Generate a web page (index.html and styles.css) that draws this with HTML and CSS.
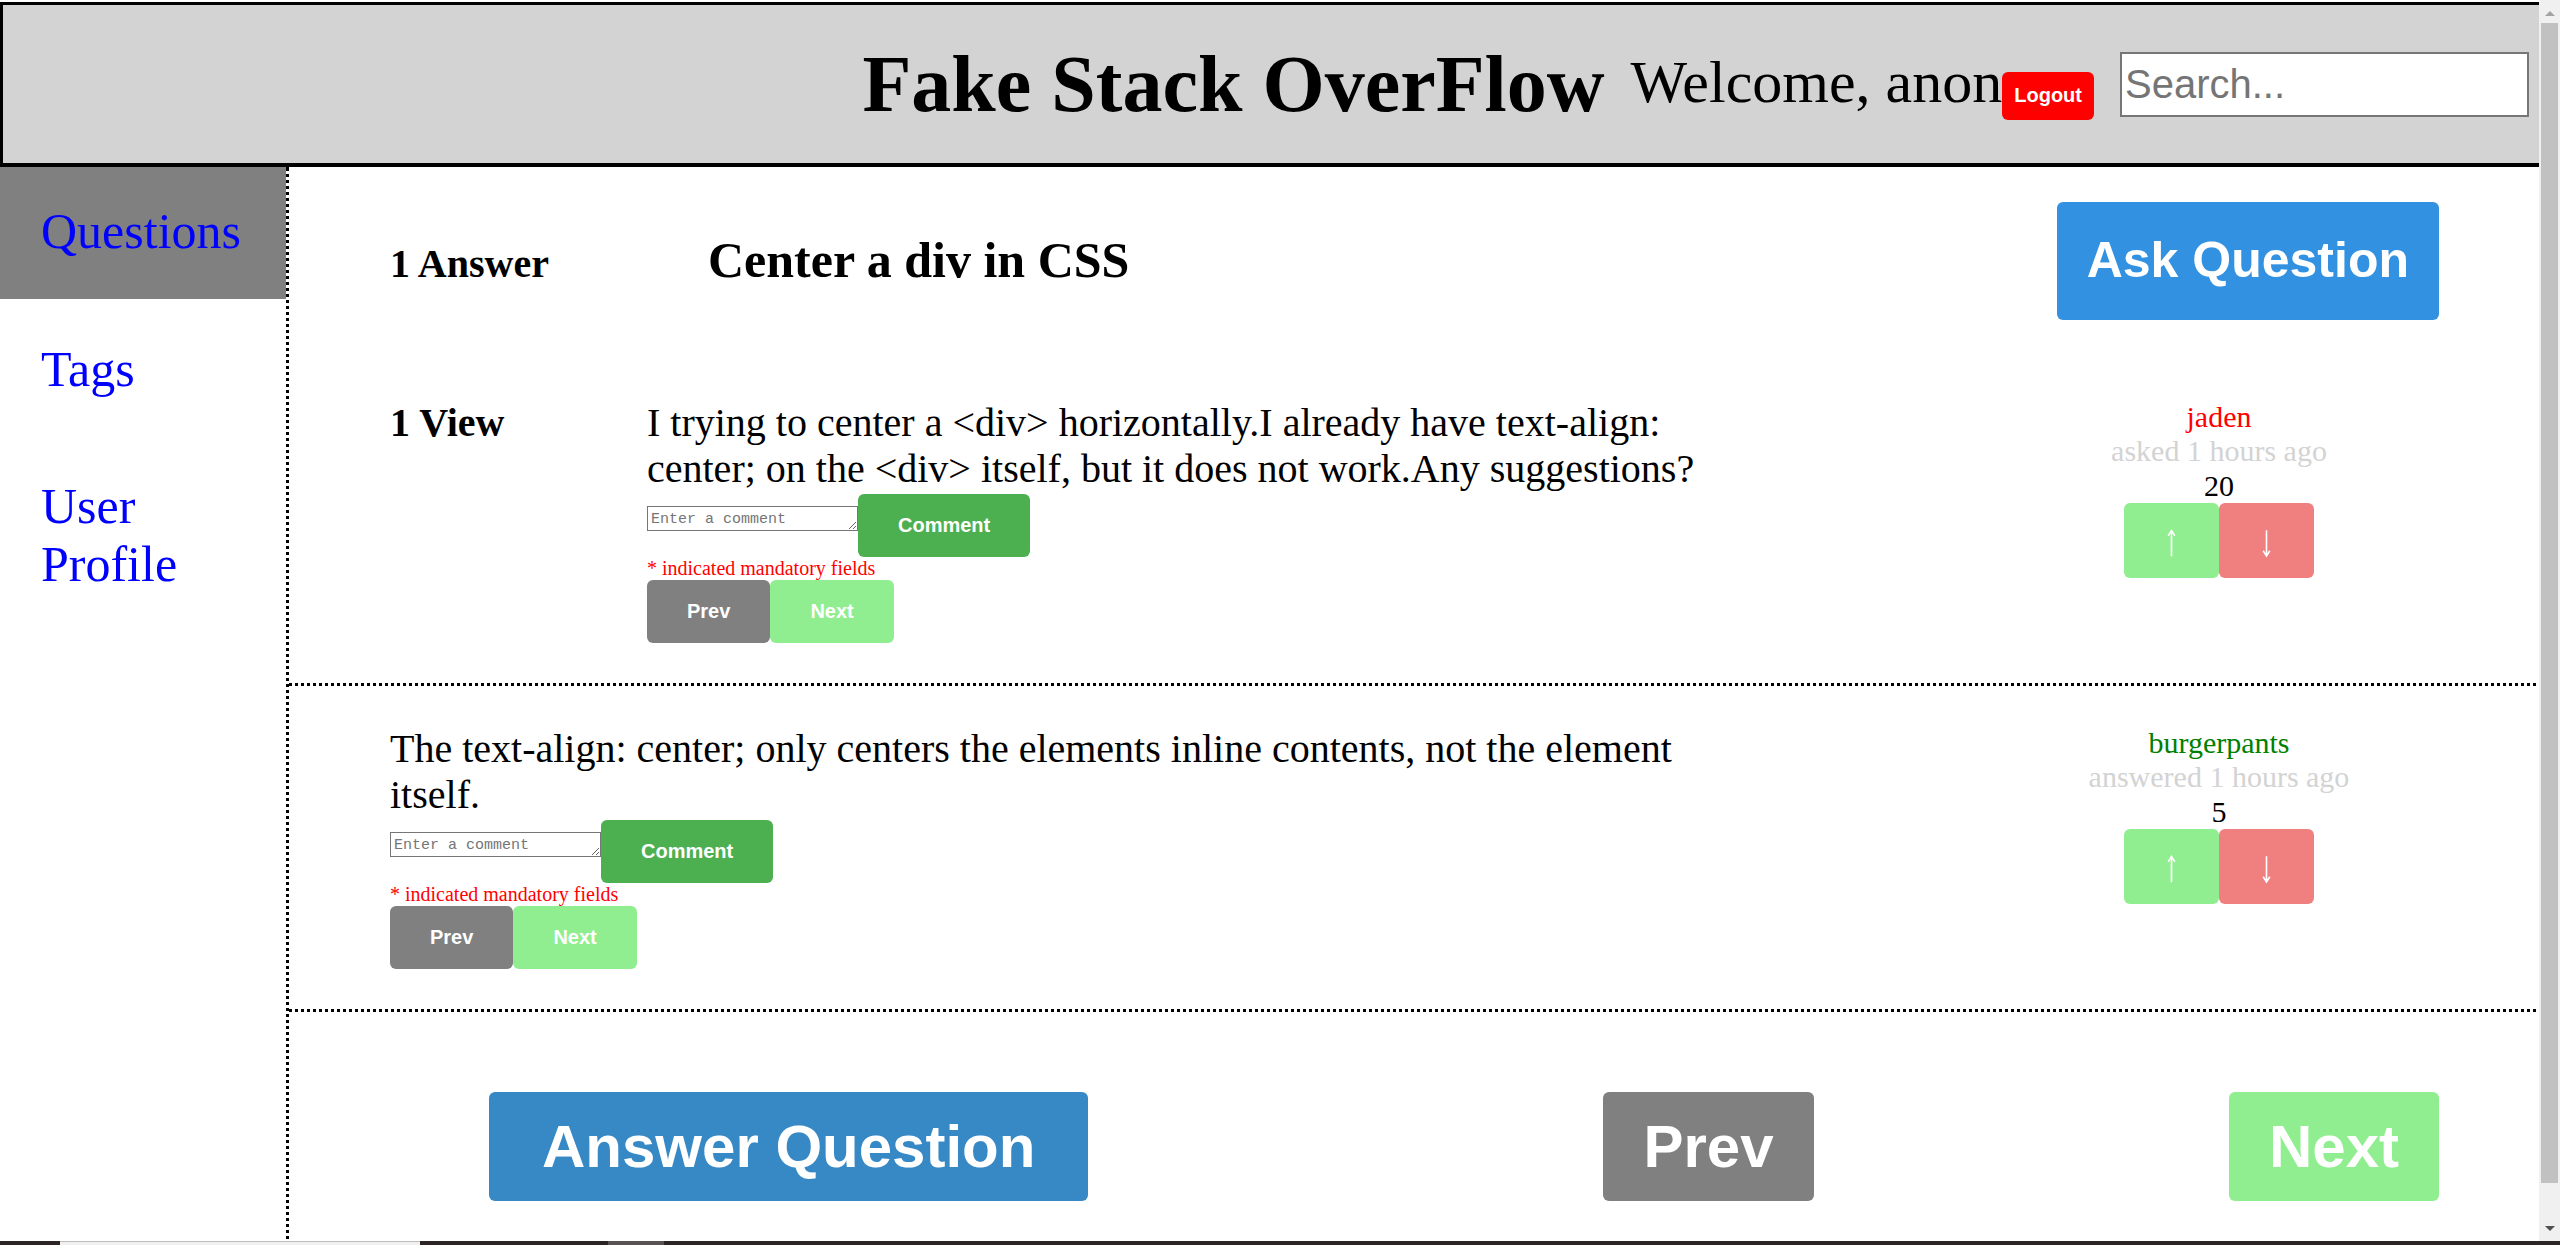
FILE: index.html
```html
<!DOCTYPE html>
<html lang="en">
<head>
<meta charset="utf-8">
<title>Fake Stack OverFlow</title>
<link rel="stylesheet" href="styles.css">
</head>
<body>
<div class="page">
  <header class="header">
    <h1 class="title">Fake Stack OverFlow</h1>
    <div class="welcome-group"><span class="welcome">Welcome, anon</span><button class="logout">Logout</button></div>
    <input class="search" type="text" placeholder="Search...">
  </header>
  <div class="layout">
    <nav class="sidebar">
      <a class="nav-item active" href="#">Questions</a>
      <a class="nav-item" href="#">Tags</a>
      <a class="nav-item" href="#">User Profile</a>
    </nav>
    <main class="main">
      <div class="q-head">
        <div class="q-count">1 Answer</div>
        <h2 class="q-title">Center a div in CSS</h2>
        <button class="ask-btn">Ask Question</button>
      </div>

      <div class="item">
        <div class="views">1 View</div>
        <div class="text-col text-col--question">
          <p class="post-text">I trying to center a &lt;div&gt; horizontally.I already have text-align: center; on the &lt;div&gt; itself, but it does not work.Any suggestions?</p>
          <div class="comment-row">
            <textarea class="comment-input" placeholder="Enter a comment"></textarea><button class="comment-btn">Comment</button>
          </div>
          <p class="mandatory">* indicated mandatory fields</p>
          <div class="pager-small">
            <button class="btn-prev">Prev</button><button class="btn-next">Next</button>
          </div>
        </div>
        <div class="author">
          <div class="author-name author-name--asker">jaden</div>
          <div class="author-meta">asked 1 hours ago</div>
          <div class="votes">20</div>
          <div class="vote-row">
            <button class="vote-up" aria-label="Upvote"><svg class="vote-icon" width="15" height="34" viewBox="0 0 15 34"><path d="M7.5 7.5V33M4.2 12.5L7.5 7.2L10.8 12.5" fill="none" stroke="#fff" stroke-width="1.6"/></svg></button><button class="vote-down" aria-label="Downvote"><svg class="vote-icon" width="15" height="34" viewBox="0 0 15 34"><path d="M7.5 7V32.5M4.2 27.5L7.5 32.8L10.8 27.5" fill="none" stroke="#fff" stroke-width="1.6"/></svg></button>
          </div>
        </div>
      </div>

      <div class="item">
        <div class="text-col text-col--answer">
          <p class="post-text">The text-align: center; only centers the elements inline contents, not the element itself.</p>
          <div class="comment-row">
            <textarea class="comment-input" placeholder="Enter a comment"></textarea><button class="comment-btn">Comment</button>
          </div>
          <p class="mandatory">* indicated mandatory fields</p>
          <div class="pager-small">
            <button class="btn-prev">Prev</button><button class="btn-next">Next</button>
          </div>
        </div>
        <div class="author">
          <div class="author-name author-name--answerer">burgerpants</div>
          <div class="author-meta">answered 1 hours ago</div>
          <div class="votes">5</div>
          <div class="vote-row">
            <button class="vote-up" aria-label="Upvote"><svg class="vote-icon" width="15" height="34" viewBox="0 0 15 34"><path d="M7.5 7.5V33M4.2 12.5L7.5 7.2L10.8 12.5" fill="none" stroke="#fff" stroke-width="1.6"/></svg></button><button class="vote-down" aria-label="Downvote"><svg class="vote-icon" width="15" height="34" viewBox="0 0 15 34"><path d="M7.5 7V32.5M4.2 27.5L7.5 32.8L10.8 27.5" fill="none" stroke="#fff" stroke-width="1.6"/></svg></button>
          </div>
        </div>
      </div>

      <div class="pager-big">
        <button class="answer-btn">Answer Question</button>
        <button class="big-prev">Prev</button>
        <button class="big-next">Next</button>
      </div>
    </main>
  </div>
</div>

<div class="scrollbar">
  <svg class="sb-arrow sb-arrow--up" width="10" height="6" viewBox="0 0 10 6"><polygon points="0,5 5,0 10,5" fill="#a3a3a3"/></svg>
  <div class="sb-thumb"></div>
  <svg class="sb-arrow sb-arrow--down" width="10" height="6" viewBox="0 0 10 6"><polygon points="0,0 10,0 5,5" fill="#505050"/></svg>
</div>
<div class="taskbar">
  <div class="task task--light"></div>
  <div class="task task--gray"></div>
</div>
</body>
</html>
```

FILE: styles.css
```css
* {
  box-sizing: border-box;
}

html,
body {
  margin: 0;
  padding: 0;
}

body {
  width: 2560px;
  height: 1245px;
  overflow: hidden;
  background: #fff;
  color: #000;
  font-family: "Liberation Serif", "Times New Roman", serif;
}

.page {
  padding-top: 2px;
}

/* ---------- header ---------- */
.header {
  display: flex;
  align-items: center;
  justify-content: flex-end;
  height: 165px;
  padding-right: 28px;
  background: #d3d3d3;
  border: 3px solid #000;
  border-bottom-width: 4px;
}

.title {
  margin: 0 26px 0 0;
  font-size: 80px;
  font-weight: bold;
  line-height: 92px;
  white-space: nowrap;
}

.welcome-group {
  font-size: 60px;
  white-space: nowrap;
  margin-right: 26px;
}

.logout {
  display: inline-block;
  padding: 12.5px 12px;
  border: none;
  border-radius: 6px;
  background: #ff0000;
  color: #fff;
  font-family: "Liberation Sans", Arial, sans-serif;
  font-size: 20px;
  font-weight: bold;
  line-height: 23px;
}

.search {
  width: 409px;
  height: 65px;
  margin: 0;
  padding: 0 3px;
  border: 2px solid #767676;
  background: #fff;
  font-family: "Liberation Sans", Arial, sans-serif;
  font-size: 40px;
}

.search::placeholder {
  color: #757575;
}

/* ---------- layout ---------- */
.layout {
  display: flex;
  min-height: 1080px;
}

.sidebar {
  flex: 0 0 289px;
  border-right: 3px dotted #000;
}

.nav-item {
  display: block;
  margin-bottom: 5.5px;
  padding: 36px 20px 38.5px 41px;
  color: #0000ff;
  font-size: 50px;
  line-height: 57.5px;
  text-decoration: none;
}

.nav-item.active {
  background: #808080;
}

.main {
  flex: 1;
  min-width: 0;
}

/* ---------- question header ---------- */
.q-head {
  display: flex;
  align-items: baseline;
  margin: 35px 121px 40px 101px;
}

.q-count {
  flex: 0 0 318px;
  font-size: 40px;
  font-weight: bold;
}

.q-title {
  margin: 0;
  font-size: 50px;
  font-weight: bold;
}

.ask-btn {
  margin-left: auto;
  padding: 30px;
  border: none;
  border-radius: 6px;
  background: #3291e0;
  color: #fff;
  font-family: "Liberation Sans", Arial, sans-serif;
  font-size: 50px;
  font-weight: bold;
  line-height: 57.5px;
}

/* ---------- items ---------- */
.item {
  display: flex;
  align-items: flex-start;
  padding: 40px 121px 40px 101px;
  border-bottom: 3px dotted #000;
}

.views {
  flex: 0 0 257px;
  font-size: 40px;
  font-weight: bold;
  line-height: 46px;
}

.text-col--question {
  width: 1083px;
}

.text-col--answer {
  width: 1341px;
}

.post-text {
  margin: 0;
  font-size: 40px;
  line-height: 46px;
}

.comment-row {
  display: flex;
  align-items: flex-start;
  margin-top: 2px;
}

.comment-input {
  width: 211px;
  height: 25px;
  margin: 12px 0 0 0;
  padding: 4px 2px 2px 3px;
  border: 1px solid #767676;
  font-family: "Liberation Mono", "DejaVu Sans Mono", monospace;
  font-size: 15px;
  line-height: 17px;
  overflow: hidden;
}

.comment-input::placeholder {
  color: #757575;
}

.comment-btn {
  padding: 20px 40px;
  border: none;
  border-radius: 6px;
  background: #4caf50;
  color: #fff;
  font-family: "Liberation Sans", Arial, sans-serif;
  font-size: 20px;
  font-weight: bold;
  line-height: 23px;
}

.mandatory {
  margin: 0;
  color: #ff0000;
  font-size: 20px;
  line-height: 23px;
}

.pager-small {
  display: flex;
}

.btn-prev,
.btn-next {
  padding: 20px 40px;
  border: none;
  border-radius: 6px;
  color: #fff;
  font-family: "Liberation Sans", Arial, sans-serif;
  font-size: 20px;
  font-weight: bold;
  line-height: 23px;
}

.btn-prev {
  background: #808080;
}

.btn-next {
  background: #90ee90;
}

/* ---------- author / votes ---------- */
.author {
  flex: 0 0 440px;
  margin-left: auto;
  text-align: center;
  font-size: 30px;
  line-height: 34.5px;
}

.author-name--asker {
  color: #ff0000;
}

.author-name--answerer {
  color: #008000;
}

.author-meta {
  color: #d3d3d3;
}

.vote-row {
  display: flex;
  justify-content: center;
}

.vote-up,
.vote-down {
  display: flex;
  padding: 20px 40px;
  border: none;
  border-radius: 6px;
}

.vote-icon {
  display: block;
  width: 15px;
  height: 34.5px;
}

.vote-up {
  background: #90ee90;
}

.vote-down {
  background: #f08080;
}

/* ---------- bottom pager ---------- */
.pager-big {
  display: flex;
  align-items: flex-start;
  margin: 80px 121px 0 101px;
}

.answer-btn,
.big-prev,
.big-next {
  padding: 20px 40px;
  border: none;
  border-radius: 6px;
  color: #fff;
  font-family: "Liberation Sans", Arial, sans-serif;
  font-size: 60px;
  font-weight: bold;
  line-height: 69px;
}

.answer-btn {
  margin-left: 99px;
  padding: 20px 53px;
  background: #3789c6;
}

.big-prev {
  margin-left: 515px;
  background: #808080;
}

.big-next {
  margin-left: auto;
  background: #90ee90;
}

/* ---------- window chrome overlays ---------- */
.scrollbar {
  position: fixed;
  top: 0;
  right: 0;
  width: 21px;
  height: 1241px;
  background: #f0f0f0;
}

.sb-arrow {
  position: absolute;
  left: 6px;
}

.sb-arrow--up {
  top: 11px;
}

.sb-arrow--down {
  top: 1226px;
}

.sb-thumb {
  position: absolute;
  top: 23px;
  left: 2px;
  width: 17px;
  height: 1160px;
  background: #c1c1c1;
}

.taskbar {
  position: fixed;
  left: 0;
  bottom: 0;
  width: 2560px;
  height: 4px;
  background: #2b2525;
}

.task {
  position: absolute;
  top: 0;
  height: 4px;
}

.task--light {
  left: 60px;
  width: 360px;
  background: #f0f0f0;
  border-top: 1px solid #bcbcbc;
}

.task--gray {
  left: 608px;
  width: 56px;
  background: #5a5353;
}
```
